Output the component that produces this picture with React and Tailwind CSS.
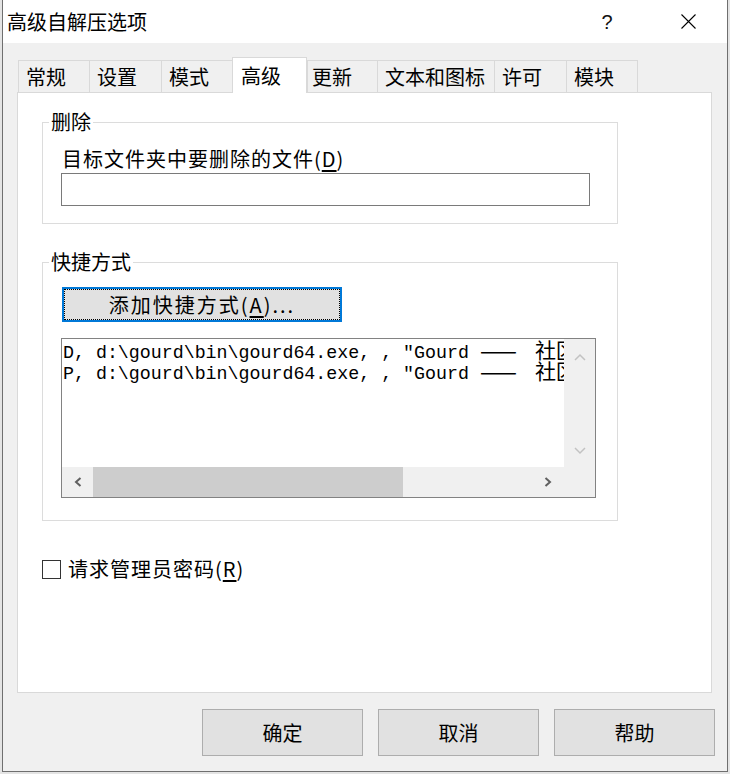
const SANS = "font-['Noto_Sans_CJK_SC',sans-serif]";

function Tab({ label, w, pl = "pl-[7px]", selected, last }) {
  if (selected) {
    return (
      <div
        className={`relative z-10 -mb-px h-[36px] ${w} ${pl} flex items-center bg-white border-l border-r border-t border-[#d9d9d9] text-[20px] leading-none`}
      >
        {label}
      </div>
    );
  }
  return (
    <div
      className={`h-[32px] ${w} ${pl} flex items-center bg-[#f0f0f0] border-l border-t ${last ? "border-r" : ""} border-[#d9d9d9] text-[20px] leading-none`}
    >
      {label}
    </div>
  );
}

function Chevron({ dir, color, sw = 1.5 }) {
  if (dir === "up")
    return (
      <svg width="12" height="8" viewBox="0 0 12 8">
        <polyline points="1,7 6,2 11,7" fill="none" stroke={color} strokeWidth={sw} />
      </svg>
    );
  if (dir === "down")
    return (
      <svg width="12" height="8" viewBox="0 0 12 8">
        <polyline points="1,1 6,6 11,1" fill="none" stroke={color} strokeWidth={sw} />
      </svg>
    );
  if (dir === "left")
    return (
      <svg width="8" height="10" viewBox="0 0 8 10">
        <polyline points="6.5,1 2,5 6.5,9" fill="none" stroke={color} strokeWidth={sw} />
      </svg>
    );
  return (
    <svg width="8" height="10" viewBox="0 0 8 10">
      <polyline points="1.5,1 6,5 1.5,9" fill="none" stroke={color} strokeWidth={sw} />
    </svg>
  );
}

function ListLine({ prefix }) {
  return (
    <div className="h-[21px] leading-[21px] whitespace-pre">
      {prefix + ', d:\\gourd\\bin\\gourd64.exe, , "Gourd '}
      <span className={`inline-block w-[44px] align-top text-[22px] leading-[21px] ${SANS}`}>——</span>
      {" "}
      <span className={`text-[21px] ${SANS}`}>社区</span>
    </div>
  );
}

export default function App() {
  return (
    <div className={`w-[730px] h-[774px] bg-[#e4e4e4] overflow-hidden text-black ${SANS}`}>
      <div className="ml-[2px] w-[726px] h-[772px] border-l border-r border-b border-[#6f6f6f] bg-[#f0f0f0] flex flex-col">
        {/* Title bar */}
        <div className="h-[43px] shrink-0 bg-white flex items-center">
          <span className="pl-[4px] text-[20px] leading-none">高级自解压选项</span>
          <div className="flex-1" />
          <span className="w-[40px] text-center text-[20px] leading-none font-['Liberation_Sans',sans-serif] text-[#111]">?</span>
          <span className="ml-[41px] w-[40px] flex justify-center">
            <svg width="15" height="15" viewBox="0 0 15 15">
              <path d="M0.5 0.5 L14.5 14.5 M14.5 0.5 L0.5 14.5" stroke="#000" strokeWidth="1.1" />
            </svg>
          </span>
          <span className="w-[19px]" />
        </div>

        {/* Tabs */}
        <div className="mt-[14px] h-[35px] shrink-0 pl-[15px] flex items-end">
          <Tab label="常规" w="w-[71px]" />
          <Tab label="设置" w="w-[72px]" />
          <Tab label="模式" w="w-[71px]" />
          <Tab label="高级" w="w-[75px]" pl="pl-[8px]" selected />
          <Tab label="更新" w="w-[70px]" pl="pl-[4px]" />
          <Tab label="文本和图标" w="w-[117px]" />
          <Tab label="许可" w="w-[72px]" />
          <Tab label="模块" w="w-[72px]" last />
        </div>

        {/* Panel */}
        <div className="ml-[14px] w-[695px] h-[601px] shrink-0 border border-[#d9d9d9] bg-white pl-[24px] pt-[15px]">
          {/* Delete group */}
          <fieldset className="w-[576px] border border-[#dcdcdc] pb-[17px]">
            <legend className="ml-[6px] px-[2px] text-[20px] leading-[28px]">删除</legend>
            <div className="mt-[9px] ml-[19px] text-[20px] leading-[28px] tracking-[1px]">
              目标文件夹中要删除的文件(<span className="underline underline-offset-[3px]">D</span>)
            </div>
            <div className="ml-[18px] w-[529px] h-[33px] border border-[#7a7a7a] bg-white" />
          </fieldset>

          {/* Shortcut group */}
          <fieldset className="mt-[24px] w-[576px] border border-[#dcdcdc] pb-[22px]">
            <legend className="ml-[6px] px-[2px] text-[20px] leading-[28px]">快捷方式</legend>
            <div className="mt-[11px] ml-[19px] w-[280px] h-[35px] border-2 border-[#0078d7] bg-[#e1e1e1]">
              <div className="h-full border border-dotted border-black flex items-center justify-center text-[20px] leading-none tracking-[2px]">
                添加快捷方式(<span className="underline underline-offset-[3px]">A</span>)...
              </div>
            </div>

            <div className="mt-[16px] ml-[18px] w-[535px] h-[160px] border border-[#828282] flex">
              <div className="w-[502px] flex flex-col">
                <div className="h-[128px] bg-white overflow-hidden pt-0 pl-[1px] font-['Liberation_Mono','Noto_Sans_CJK_SC',monospace] text-[18.3px]">
                  <ListLine prefix="D" />
                  <ListLine prefix="P" />
                </div>
                <div className="h-[30px] bg-[#f0f0f0] flex">
                  <div className="w-[31px] flex items-center justify-center">
                    <Chevron dir="left" color="#606060" sw={2} />
                  </div>
                  <div className="w-[310px] bg-[#cdcdcd]" />
                  <div className="flex-1" />
                  <div className="w-[32px] flex items-center justify-center">
                    <Chevron dir="right" color="#606060" sw={2} />
                  </div>
                </div>
              </div>
              <div className="w-[31px] bg-[#f0f0f0] flex flex-col items-center">
                <div className="mt-[14px]">
                  <Chevron dir="up" color="#c2c2c2" />
                </div>
                <div className="mt-[86px]">
                  <Chevron dir="down" color="#c2c2c2" />
                </div>
              </div>
            </div>
          </fieldset>

          {/* Checkbox */}
          <div className="mt-[34px] flex items-center">
            <div className="w-[19px] h-[19px] border border-[#333333] bg-white" />
            <span className="ml-[7px] text-[20px] leading-[28px] tracking-[1px]">
              请求管理员密码(<span className="underline underline-offset-[3px]">R</span>)
            </span>
          </div>
        </div>

        {/* Bottom buttons */}
        <div className="mt-[16px] h-[47px] shrink-0 flex justify-end gap-[15px] pr-[12px]">
          <div className="w-[161px] border border-[#adadad] bg-[#e1e1e1] flex items-center justify-center text-[20px] leading-none">确定</div>
          <div className="w-[161px] border border-[#adadad] bg-[#e1e1e1] flex items-center justify-center text-[20px] leading-none">取消</div>
          <div className="w-[161px] border border-[#adadad] bg-[#e1e1e1] flex items-center justify-center text-[20px] leading-none">帮助</div>
        </div>
      </div>
    </div>
  );
}
